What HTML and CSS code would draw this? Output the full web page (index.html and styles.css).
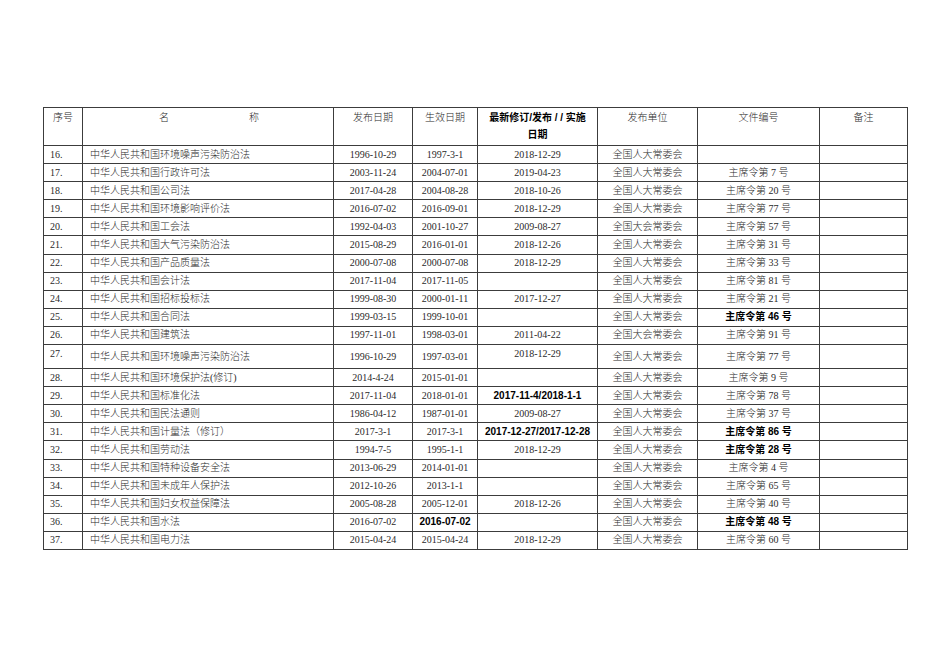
FILE: index.html
```html
<!DOCTYPE html>
<html lang="zh-CN">
<head>
<meta charset="utf-8">
<title>法律法规清单</title>
<link rel="stylesheet" href="styles.css">
</head>
<body>
<table class="law-table">
  <colgroup>
    <col class="c-no"><col class="c-name"><col class="c-pub"><col class="c-eff"><col class="c-rev"><col class="c-org"><col class="c-doc"><col class="c-note">
  </colgroup>
  <thead>
    <tr class="head">
      <th>序号</th>
      <th><div class="spread"><span>名</span><span>称</span></div></th>
      <th>发布日期</th>
      <th>生效日期</th>
      <th class="strong">最新修订/发布 / / 实施<br>日期</th>
      <th>发布单位</th>
      <th>文件编号</th>
      <th>备注</th>
    </tr>
  </thead>
  <tbody>
    <tr><td class="no">16.</td><td class="name">中华人民共和国环境噪声污染防治法</td><td>1996-10-29</td><td>1997-3-1</td><td>2018-12-29</td><td>全国人大常委会</td><td></td><td></td></tr>
    <tr><td class="no">17.</td><td class="name">中华人民共和国行政许可法</td><td>2003-11-24</td><td>2004-07-01</td><td>2019-04-23</td><td>全国人大常委会</td><td>主席令第 7 号</td><td></td></tr>
    <tr><td class="no">18.</td><td class="name">中华人民共和国公司法</td><td>2017-04-28</td><td>2004-08-28</td><td>2018-10-26</td><td>全国人大常委会</td><td>主席令第 20 号</td><td></td></tr>
    <tr><td class="no">19.</td><td class="name">中华人民共和国环境影响评价法</td><td>2016-07-02</td><td>2016-09-01</td><td>2018-12-29</td><td>全国人大常委会</td><td>主席令第 77 号</td><td></td></tr>
    <tr><td class="no">20.</td><td class="name">中华人民共和国工会法</td><td>1992-04-03</td><td>2001-10-27</td><td>2009-08-27</td><td>全国大会常委会</td><td>主席令第 57 号</td><td></td></tr>
    <tr><td class="no">21.</td><td class="name">中华人民共和国大气污染防治法</td><td>2015-08-29</td><td>2016-01-01</td><td>2018-12-26</td><td>全国人大常委会</td><td>主席令第 31 号</td><td></td></tr>
    <tr><td class="no">22.</td><td class="name">中华人民共和国产品质量法</td><td>2000-07-08</td><td>2000-07-08</td><td>2018-12-29</td><td>全国人大常委会</td><td>主席令第 33 号</td><td></td></tr>
    <tr><td class="no">23.</td><td class="name">中华人民共和国会计法</td><td>2017-11-04</td><td>2017-11-05</td><td></td><td>全国人大常委会</td><td>主席令第 81 号</td><td></td></tr>
    <tr><td class="no">24.</td><td class="name">中华人民共和国招标投标法</td><td>1999-08-30</td><td>2000-01-11</td><td>2017-12-27</td><td>全国人大常委会</td><td>主席令第 21 号</td><td></td></tr>
    <tr><td class="no">25.</td><td class="name">中华人民共和国合同法</td><td>1999-03-15</td><td>1999-10-01</td><td></td><td>全国人大常委会</td><td class="strong">主席令第 46 号</td><td></td></tr>
    <tr><td class="no">26.</td><td class="name">中华人民共和国建筑法</td><td>1997-11-01</td><td>1998-03-01</td><td>2011-04-22</td><td>全国大会常委会</td><td>主席令第 91 号</td><td></td></tr>
    <tr class="tall"><td class="no top">27.</td><td class="name">中华人民共和国环境噪声污染防治法</td><td>1996-10-29</td><td>1997-03-01</td><td class="top">2018-12-29</td><td>全国人大常委会</td><td>主席令第 77 号</td><td></td></tr>
    <tr><td class="no">28.</td><td class="name">中华人民共和国环境保护法(修订)</td><td>2014-4-24</td><td>2015-01-01</td><td></td><td>全国人大常委会</td><td>主席令第 9 号</td><td></td></tr>
    <tr><td class="no">29.</td><td class="name">中华人民共和国标准化法</td><td>2017-11-04</td><td>2018-01-01</td><td class="strong">2017-11-4/2018-1-1</td><td>全国人大常委会</td><td>主席令第 78 号</td><td></td></tr>
    <tr><td class="no">30.</td><td class="name">中华人民共和国民法通则</td><td>1986-04-12</td><td>1987-01-01</td><td>2009-08-27</td><td>全国人大常委会</td><td>主席令第 37 号</td><td></td></tr>
    <tr><td class="no">31.</td><td class="name">中华人民共和国计量法（修订）</td><td>2017-3-1</td><td>2017-3-1</td><td class="strong">2017-12-27/2017-12-28</td><td>全国人大常委会</td><td class="strong">主席令第 86 号</td><td></td></tr>
    <tr><td class="no">32.</td><td class="name">中华人民共和国劳动法</td><td>1994-7-5</td><td>1995-1-1</td><td>2018-12-29</td><td>全国人大常委会</td><td class="strong">主席令第 28 号</td><td></td></tr>
    <tr><td class="no">33.</td><td class="name">中华人民共和国特种设备安全法</td><td>2013-06-29</td><td>2014-01-01</td><td></td><td>全国人大常委会</td><td>主席令第 4 号</td><td></td></tr>
    <tr><td class="no">34.</td><td class="name">中华人民共和国未成年人保护法</td><td>2012-10-26</td><td>2013-1-1</td><td></td><td>全国人大常委会</td><td>主席令第 65 号</td><td></td></tr>
    <tr><td class="no">35.</td><td class="name">中华人民共和国妇女权益保障法</td><td>2005-08-28</td><td>2005-12-01</td><td>2018-12-26</td><td>全国人大常委会</td><td>主席令第 40 号</td><td></td></tr>
    <tr><td class="no">36.</td><td class="name">中华人民共和国水法</td><td>2016-07-02</td><td class="strong">2016-07-02</td><td></td><td>全国人大常委会</td><td class="strong">主席令第 48 号</td><td></td></tr>
    <tr><td class="no">37.</td><td class="name">中华人民共和国电力法</td><td>2015-04-24</td><td>2015-04-24</td><td>2018-12-29</td><td>全国人大常委会</td><td>主席令第 60 号</td><td></td></tr>
  </tbody>
</table>
</body>
</html>
```

FILE: styles.css
```css
html, body {
  margin: 0;
  padding: 0;
  background: #ffffff;
}

body {
  padding: 107px 0 0 43px;
}

.law-table {
  border-collapse: collapse;
  table-layout: fixed;
  width: 864px;
  font-family: "Liberation Serif", "Noto Sans CJK SC", serif;
  font-size: 10px;
  font-weight: 300;
  color: #2a2a2a;
}

.c-no { width: 39px; }
.c-name { width: 251px; }
.c-pub { width: 79px; }
.c-eff { width: 65px; }
.c-rev { width: 120px; }
.c-org { width: 100px; }
.c-doc { width: 122px; }
.c-note { width: 88px; }

.law-table th,
.law-table td {
  border: 1px solid #3c3c3c;
  padding: 0;
  text-align: center;
  white-space: nowrap;
  overflow: hidden;
}

.law-table th {
  font-weight: 300;
  vertical-align: top;
  line-height: 17px;
  padding-top: 1px;
  height: 36px;
}

.law-table td {
  height: 17.1px;
  line-height: 14px;
  vertical-align: middle;
}

.law-table tr.tall td {
  height: 21px;
}

.law-table td.top {
  vertical-align: top;
  padding-top: 2px;
}

.spread {
  display: flex;
  justify-content: space-between;
  padding: 0 74px 0 76px;
}

.law-table td.no {
  text-align: left;
  padding-left: 6px;
}

.law-table td.name {
  text-align: left;
  padding-left: 7px;
}

.law-table .strong {
  font-family: "Liberation Sans", "Noto Sans CJK SC", sans-serif;
  font-weight: 700;
  color: #000000;
}
```
